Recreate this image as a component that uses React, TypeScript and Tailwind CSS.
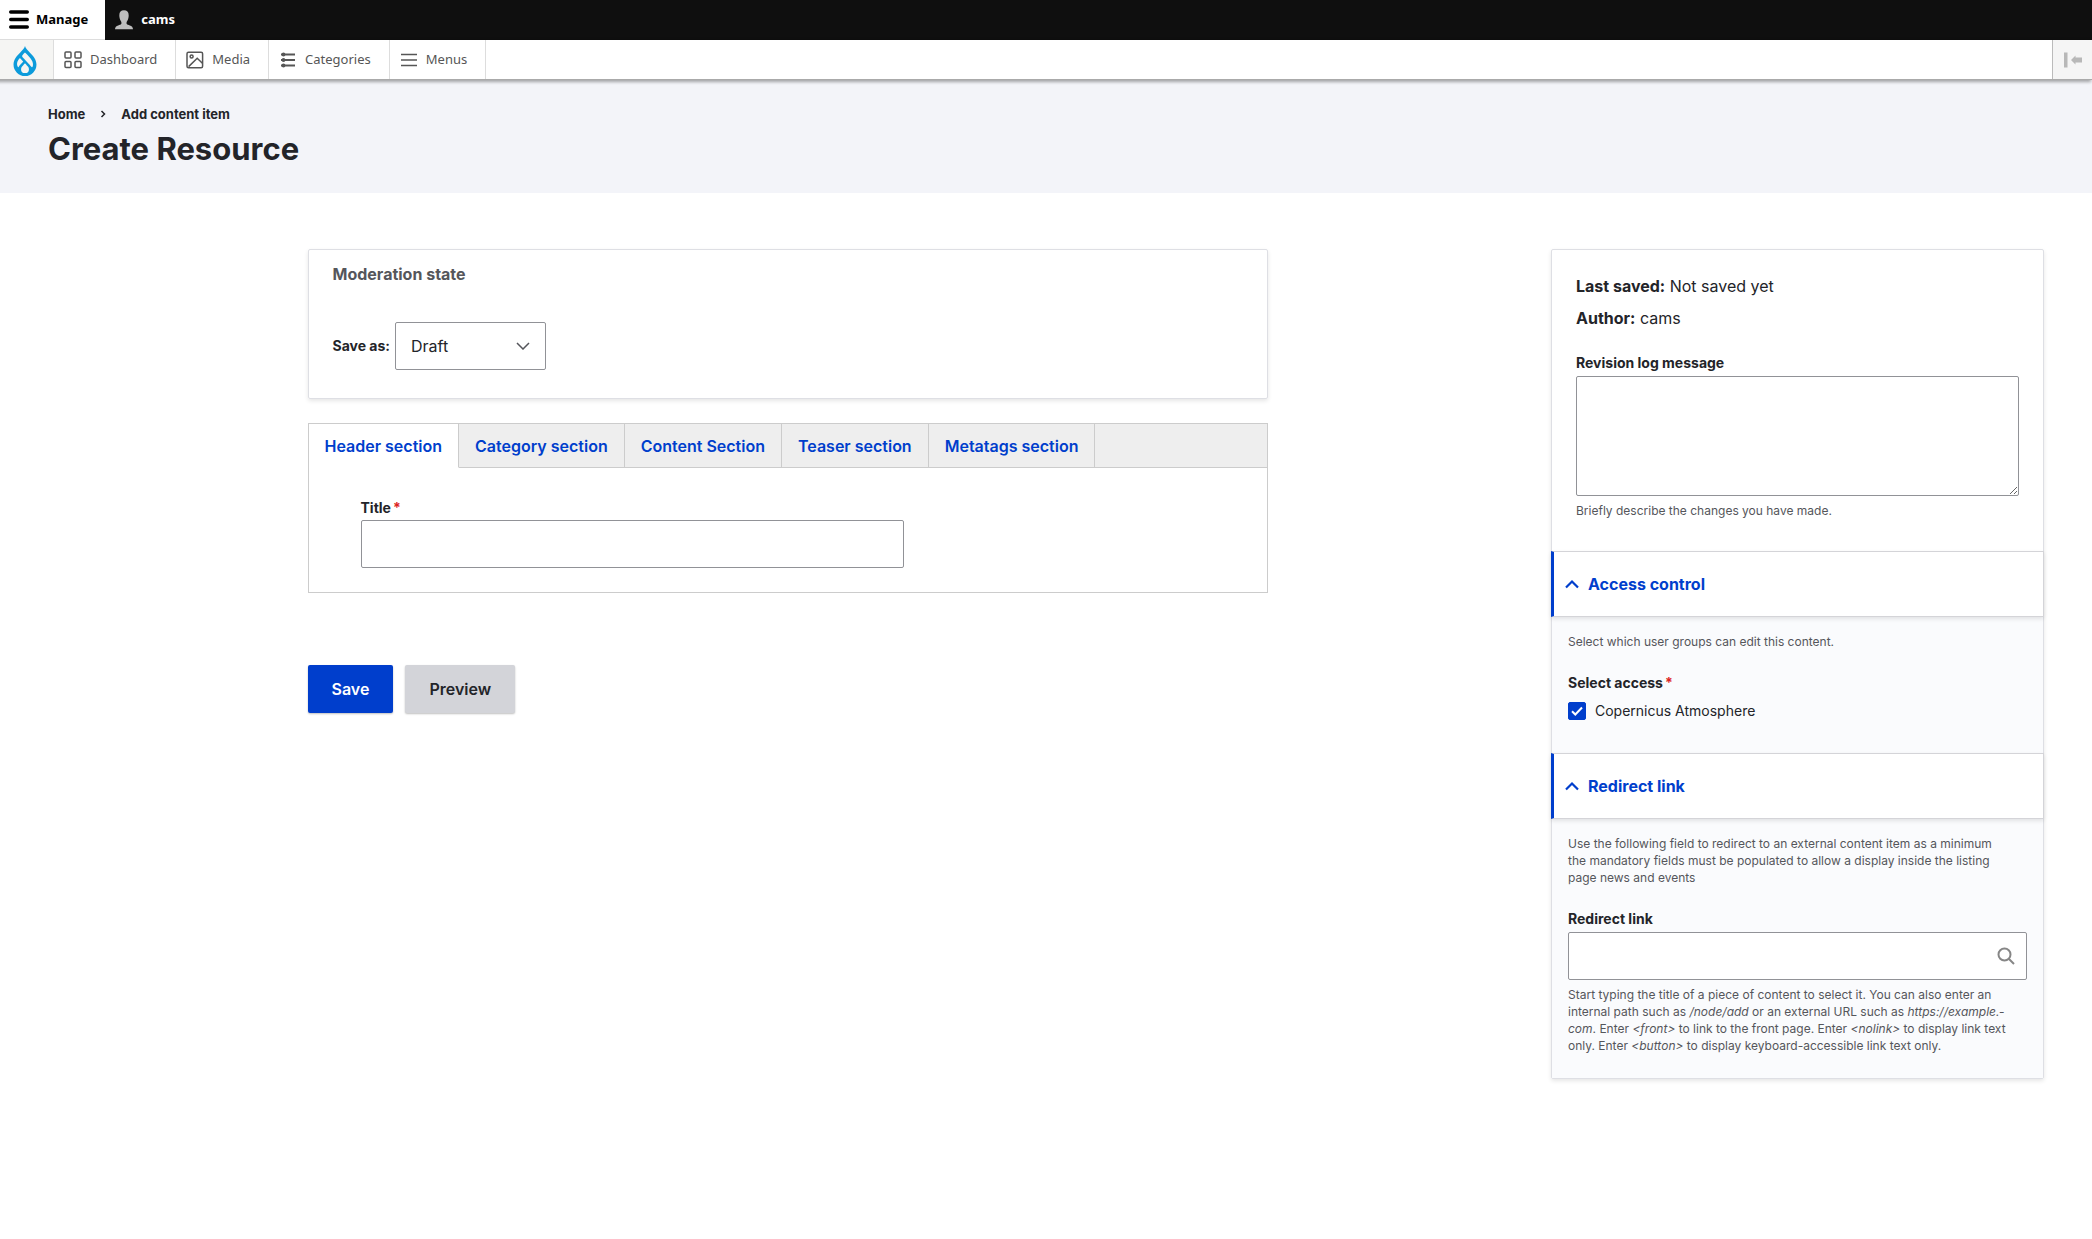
import { useState } from "react";
import type { ReactNode } from "react";
import { SiDrupal } from "react-icons/si";

const toolbarItems: { label: string; icon: ReactNode }[] = [
  {
    label: "Dashboard",
    icon: (
      <svg viewBox="0 0 18 18" className="size-[18px]" fill="none" stroke="currentColor" strokeWidth="1.5">
        <rect x="1" y="1" width="6" height="6" rx="1" />
        <rect x="11" y="1" width="6" height="6" rx="1" />
        <rect x="1" y="10.5" width="6" height="6" rx="1" />
        <rect x="11" y="10.5" width="6" height="6" rx="1" />
      </svg>
    ),
  },
  {
    label: "Media",
    icon: (
      <svg viewBox="0 0 18 18" className="size-[18px]" fill="none" stroke="currentColor" strokeWidth="1.5">
        <rect x="1" y="1.2" width="15.6" height="15.6" rx="1.5" />
        <circle cx="5.6" cy="5.6" r="1.5" />
        <path d="M2.6 15.6 11.2 7.2 16.4 12.2" />
      </svg>
    ),
  },
  {
    label: "Categories",
    icon: (
      <svg viewBox="0 0 18 18" className="size-[18px]" fill="none" stroke="currentColor" strokeWidth="1.8">
        <path d="M2 3.500h14M2 9h14M2 14.500h14" />
        <g fill="currentColor" stroke="none">
          <circle cx="4.500" cy="3.500" r="1.9" />
          <circle cx="4.500" cy="9" r="1.9" />
          <circle cx="4.500" cy="14.500" r="1.9" />
        </g>
      </svg>
    ),
  },
  {
    label: "Menus",
    icon: (
      <svg viewBox="0 0 18 18" className="size-[18px]" fill="none" stroke="currentColor" strokeWidth="1.6">
        <path d="M1 3.500h16M1 9h16M1 14.500h16" />
      </svg>
    ),
  },
];

const tabs = ["Header section", "Category section", "Content Section", "Teaser section", "Metatags section"];

function Required() {
  return <span className="ml-0.5 text-[#dc2323]">*</span>;
}

function Toolbar() {
  return (
    <div className="relative font-['Noto_Sans','Open_Sans',sans-serif] text-[13px]">
      <nav aria-label="Administration toolbar" className="flex h-10 bg-[#0f0f0f] font-bold">
        <a href="#manage" className="flex items-center gap-[7px] border-b border-[#ddd] bg-white pr-[17px] pl-[9px] text-black">
          <svg viewBox="0 0 20 20" className="size-5" fill="none" stroke="currentColor" strokeWidth="3.400" strokeLinecap="round">
            <path d="M1.700 2h16.600M1.700 9.500h16.600M1.700 17h16.600" />
          </svg>
          Manage
        </a>
        <a href="#cams" className="flex items-center gap-2 px-2.5 text-white">
          <svg viewBox="0 0 18 20" className="h-5 w-[18px]" fill="#bebebe">
            <path d="M9 .3c3 0 4.700 1.900 4.700 4.900 0 2-.5 4.200-1.500 5.700-.7 1-.9 2.300-.4 3.200.4.700 1.700.9 3 1.400 1.900.6 3.200 1.700 3.200 3.800H0c0-2.100 1.300-3.200 3.200-3.800 1.300-.5 2.600-.7 3-1.400.5-.9.3-2.200-.4-3.200-1-1.500-1.500-3.700-1.500-5.700C4.300 2.200 6 .3 9 .3z" />
          </svg>
          cams
        </a>
      </nav>
      <nav
        aria-label="Administration menu"
        className="flex h-10 border-b border-[#aaa] bg-white text-[#565656] shadow-[-2px_1px_3px_1px_rgba(0,0,0,0.33)]"
      >
        <a href="#home" aria-label="Home" className="flex w-[54px] items-center border-r border-[#ddd] bg-[#f5f5f3] pt-0.5 pl-2.5">
          <SiDrupal className="size-[30px] text-[#0c9bdb]" />
        </a>
        {toolbarItems.map((item) => (
          <a key={item.label} href={"#" + item.label} className="flex items-center gap-2 border-r border-[#ddd] pr-[18px] pl-2.5">
            {item.icon}
            {item.label}
          </a>
        ))}
        <button type="button" aria-label="Vertical orientation" className="ml-auto flex w-10 items-center justify-center border-l border-[#bbb] bg-[#f5f5f5]">
          <svg viewBox="0 0 20 16" className="h-4 w-5" fill="#b8b8b8">
            <rect x="1" y="0.500" width="3.500" height="15" />
            <path d="M8 8l4.500-4.500v2H19v5h-6.500v2z" />
          </svg>
        </button>
      </nav>
    </div>
  );
}

function Accordion({ title, children }: { title: string; children: ReactNode }) {
  const [open, setOpen] = useState(true);
  return (
    <section>
      <h2 className="relative -mx-px">
        <button
          type="button"
          aria-expanded={open}
          onClick={() => setOpen(!open)}
          className="flex h-[66px] w-full items-center gap-2 border border-l-3 border-[#d4d4d8] border-l-[#003ecc] bg-white pl-2.5 text-base font-bold text-[#003ecc] shadow-[0_2px_4px_rgba(0,0,0,0.1)]"
        >
          <svg viewBox="0 0 16 16" className={open ? "size-4" : "size-4 rotate-180"} fill="none" stroke="currentColor" strokeWidth="2.200">
            <path d="M2 11.500 8 5.500l6 6" />
          </svg>
          {title}
        </button>
      </h2>
      {open && <div className="bg-[#fafbfd] px-4 pt-4">{children}</div>}
    </section>
  );
}

export default function App() {
  const [tab, setTab] = useState(0);
  return (
    <div className="min-h-screen bg-white font-['Inter',sans-serif] text-base text-[#232429]">
      <Toolbar />
      <header className="bg-[#f3f4f9] px-12 pt-6 pb-6">
        <nav aria-label="Breadcrumb" className="flex items-center text-[13px] leading-5 font-bold">
          <a href="#home">Home</a>
          <svg viewBox="0 0 6 8" className="mx-[15px] h-2 w-1.5" fill="none" stroke="currentColor" strokeWidth="1.500">
            <path d="M1.500 1l3 3-3 3" />
          </svg>
          <a href="#add">Add content item</a>
        </nav>
        <h1 className="mt-[5px] text-[31px] leading-10 font-bold">Create Resource</h1>
      </header>

      <form className="grid grid-cols-[3fr_1fr] items-start gap-6 px-12 pt-14" onSubmit={(e) => e.preventDefault()}>
        <main className="mx-auto w-full max-w-[960px]">
          <section className="rounded-xs border border-[#dedfe4] px-6 pt-3 pb-7 shadow-[0_2px_4px_rgba(0,0,0,0.1)]">
            <h2 className="leading-6 font-bold text-[#55565b]">Moderation state</h2>
            <div className="mt-9 flex items-center gap-[5px]">
              <label htmlFor="state" className="text-sm font-bold">
                Save as:
              </label>
              <div className="relative">
                <select id="state" className="h-12 w-[151px] appearance-none rounded-xs border border-[#919297] bg-white px-[15px]">
                  <option>Draft</option>
                </select>
                <svg viewBox="0 0 14 8" className="pointer-events-none absolute top-5 right-4 h-2 w-3.5" fill="none" stroke="#55565b" strokeWidth="1.500">
                  <path d="M1 1l6 6 6-6" />
                </svg>
              </div>
            </div>
          </section>

          <section className="mt-6 border border-[#ccc]">
            <div role="tablist" className="flex bg-[#eee]">
              {tabs.map((label, i) => (
                <button
                  key={label}
                  type="button"
                  role="tab"
                  aria-selected={i === tab}
                  onClick={() => setTab(i)}
                  className={
                    i === tab
                      ? "h-11 border-r border-b border-r-[#ccc] border-b-white bg-white px-4 font-semibold text-[#003ecc]"
                      : "h-11 border-r border-b border-[#ccc] px-4 font-semibold text-[#003ecc]"
                  }
                >
                  {label}
                </button>
              ))}
              <div className="flex-1 border-b border-[#ccc]" />
            </div>
            <div className="px-[52px] pt-7 pb-6">
              <label htmlFor="title" className="block text-sm leading-6 font-bold">
                Title
                <Required />
              </label>
              <input id="title" type="text" className="block h-12 w-[543px] max-w-full rounded-xs border border-[#919297] bg-white px-4" />
            </div>
          </section>

          <div className="mt-[72px] flex gap-3">
            <button type="submit" className="h-12 rounded-xs bg-[#003ecc] px-6 font-semibold text-white shadow-[0_1px_2px_rgba(0,0,0,0.25)]">
              Save
            </button>
            <button type="button" className="h-12 rounded-xs bg-[#d3d4d9] px-6 font-semibold shadow-[0_1px_2px_rgba(0,0,0,0.25)]">
              Preview
            </button>
          </div>
        </main>

        <aside className="rounded-xs border border-[#dedfe4] shadow-[0_2px_4px_rgba(0,0,0,0.1)]">
          <div className="px-6 pt-6 pb-8">
            <p className="leading-6">
              <b>Last saved:</b> Not saved yet
            </p>
            <p className="mt-2 leading-6">
              <b>Author:</b> cams
            </p>
            <label htmlFor="log" className="mt-[21px] block text-sm leading-6 font-bold">
              Revision log message
            </label>
            <textarea id="log" className="mt-px block h-[120px] w-full rounded-xs border border-[#919297] bg-white p-4" />
            <p className="mt-1.5 text-xs leading-[17px] text-[#55565b]">Briefly describe the changes you have made.</p>
          </div>

          <Accordion title="Access control">
            <p className="text-xs leading-[17px] text-[#55565b]">Select which user groups can edit this content.</p>
            <fieldset className="pt-5 pb-8">
              <legend className="contents text-sm leading-6 font-bold">
                Select access
                <Required />
              </legend>
              <div className="mt-1.5 flex items-center gap-[9px]">
                <span className="relative flex">
                  <input
                    id="atmosphere"
                    type="checkbox"
                    defaultChecked
                    className="peer size-[18px] appearance-none rounded-xs border border-[#919297] bg-white checked:border-[#003ecc] checked:bg-[#003ecc]"
                  />
                  <svg
                    viewBox="0 0 18 18"
                    className="pointer-events-none absolute inset-0 hidden size-[18px] peer-checked:block"
                    fill="none"
                    stroke="white"
                    strokeWidth="2"
                  >
                    <path d="M4 9.200 7.300 12.500 14 5.500" />
                  </svg>
                </span>
                <label htmlFor="atmosphere" className="text-sm">
                  Copernicus Atmosphere
                </label>
              </div>
            </fieldset>
          </Accordion>

          <Accordion title="Redirect link">
            <p className="max-w-[440px] text-xs leading-[17px] text-[#55565b]">
              Use the following field to redirect to an external content item as a minimum the mandatory fields must be populated to allow a
              display inside the listing page news and events
            </p>
            <label htmlFor="link" className="mt-[21px] block text-sm leading-6 font-bold">
              Redirect link
            </label>
            <div className="relative mt-px">
              <input id="link" type="text" className="block h-12 w-full rounded-xs border border-[#919297] bg-white pr-10 pl-4" />
              <svg viewBox="0 0 18 18" className="pointer-events-none absolute top-[15px] right-3 size-[18px]" fill="none" stroke="#868686" strokeWidth="2">
                <circle cx="7.500" cy="7.500" r="6" />
                <path d="M12 12l5 5" />
              </svg>
            </div>
            <p className="mt-1.5 max-w-[440px] pb-6 text-xs leading-[17px] text-[#55565b]">
              Start typing the title of a piece of content to select it. You can also enter an internal path such as <em>/node/add</em> or an
              external URL such as <em>https://example.&shy;com</em>. Enter <em>&lt;front&gt;</em> to link to the front page. Enter{" "}
              <em>&lt;nolink&gt;</em> to display link text only. Enter <em>&lt;button&gt;</em> to display keyboard-accessible link text only.
            </p>
          </Accordion>
        </aside>
      </form>
    </div>
  );
}
